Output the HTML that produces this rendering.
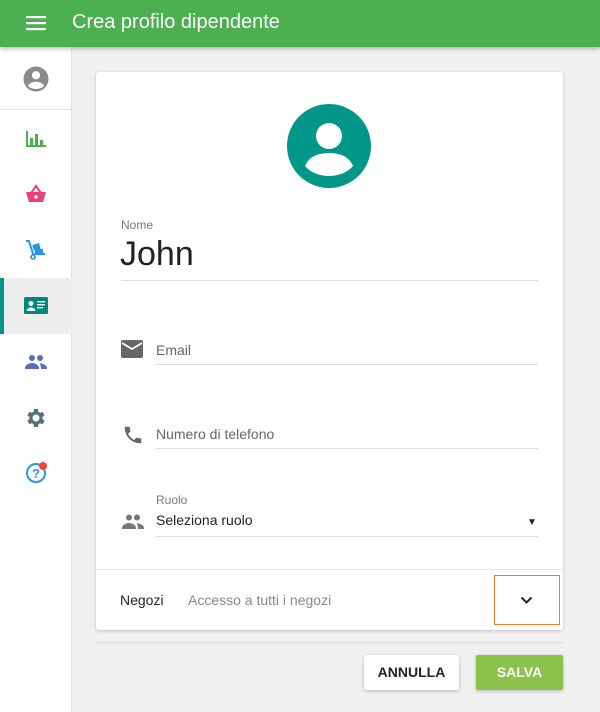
<!DOCTYPE html>
<html><head><meta charset="utf-8"><style>
*{margin:0;padding:0;box-sizing:border-box}
body{width:600px;height:712px;background:#f0f0f0;font-family:"Liberation Sans",Roboto,sans-serif;position:relative;overflow:hidden}
.hdr{position:absolute;left:0;top:0;width:600px;height:47px;background:#4caf50;box-shadow:0 2px 4px rgba(0,0,0,.25);z-index:2}
.hdr .t{position:absolute;left:72px;top:11px;color:#fff;font-size:20px}
.side{position:absolute;left:0;top:47px;width:72px;height:665px;background:#fff;border-right:1px solid #e0e0e0}
.ic{position:absolute;left:24px;width:24px;height:24px}
.card{position:absolute;left:96px;top:72px;width:467px;height:558px;background:#fff;border-radius:3px;box-shadow:0 1px 3px rgba(0,0,0,.2)}
.a{position:absolute;color:#555}
.ul{position:absolute;height:1px;background:#ddd}
</style></head><body>
<div class="hdr">
<svg style="position:absolute;left:26px;top:14px" width="20" height="18"><rect y="2" width="20" height="2.2" fill="#fff"/><rect y="8" width="20" height="2.2" fill="#fff"/><rect y="14" width="20" height="2.2" fill="#fff"/></svg>
<div class="t">Crea profilo dipendente</div></div>
<div class="side">
<svg class="ic" style="left:21px;top:17px;width:30px;height:30px" viewBox="0 0 24 24"><circle cx="12" cy="12" r="10" fill="#8a8a8a"/><circle cx="12" cy="9" r="3.3" fill="#fff"/><path d="M5.5 17.5c1.5-2.5 4-3.3 6.5-3.3s5 .8 6.5 3.3C17 19 14.7 20 12 20s-5-1-6.5-2.5z" fill="#fff"/></svg>
<div style="position:absolute;left:0;top:62px;width:72px;height:1px;background:#e0e0e0"></div>
<svg class="ic" style="top:80px" viewBox="0 0 24 24"><path d="M2 4h2v16H2zM6 11h3v9H6zM11 7h3v13h-3zM16 13h3v7h-3zM2 18h20v2H2z" fill="#4caf50"/></svg>
<svg class="ic" style="top:136px" viewBox="0 0 24 24"><path d="M12 3L7 10h10z" fill="none" stroke="#ec407a" stroke-width="2"/><path d="M2 9h20l-3 10H5z" fill="#ec407a"/><circle cx="12" cy="14" r="1.7" fill="#fff"/></svg>
<svg class="ic" style="top:191px" viewBox="0 0 24 24"><path d="M2 3h3l4 13h12" fill="none" stroke="#2196f3" stroke-width="2"/><rect x="9" y="6" width="7" height="6" fill="#2196f3" transform="rotate(-15 12 9)"/><rect x="11" y="11" width="8" height="4" fill="#2196f3"/><circle cx="9" cy="19" r="2" fill="none" stroke="#2196f3" stroke-width="1.6"/></svg>
<div style="position:absolute;left:0;top:231px;width:72px;height:56px;background:#eee"></div>
<div style="position:absolute;left:0;top:231px;width:4px;height:56px;background:#009688"></div>
<svg class="ic" style="top:247px" viewBox="0 0 24 24"><rect x="0" y="3" width="24" height="17" rx="1.5" fill="#00897b"/><circle cx="7" cy="9.5" r="2.5" fill="#fff"/><path d="M2.5 17c.5-2.5 2.5-3.5 4.5-3.5s4 1 4.5 3.5z" fill="#fff"/><rect x="13" y="7" width="8" height="1.4" fill="#fff"/><rect x="13" y="10" width="8" height="1.4" fill="#fff"/><rect x="13" y="13" width="6" height="1.4" fill="#fff"/></svg>
<svg class="ic" style="top:303px" viewBox="0 0 24 24"><circle cx="8" cy="8" r="3" fill="#5c6bc0"/><circle cx="16" cy="8" r="3" fill="#5c6bc0"/><path d="M1 18c0-3 4-5 7-5s7 2 7 5v1H1zM15.5 13.2c3 .2 7.5 1.6 7.5 4.8v1h-6v-1c0-2-.6-3.5-1.5-4.8z" fill="#5c6bc0"/></svg>
<svg class="ic" style="top:359px" viewBox="0 0 24 24"><path d="M19.4 13a7.5 7.5 0 0 0 0-2l2.1-1.6-2-3.5-2.5 1a7 7 0 0 0-1.7-1L15 3h-4l-.4 2.7a7 7 0 0 0-1.7 1l-2.5-1-2 3.5L6.5 11a7.5 7.5 0 0 0 0 2l-2.1 1.6 2 3.5 2.5-1c.5.4 1.1.8 1.7 1L11 21h4l.4-2.7c.6-.3 1.2-.6 1.7-1l2.5 1 2-3.5zM13 15.5a3.5 3.5 0 1 1 0-7 3.5 3.5 0 0 1 0 7z" fill="#546e7a" transform="translate(-1 0)"/></svg>
<svg class="ic" style="top:414px" viewBox="0 0 24 24"><circle cx="12" cy="12" r="9" fill="none" stroke="#2196f3" stroke-width="2"/><text x="12" y="17" font-size="13" font-weight="bold" text-anchor="middle" fill="#2196f3" font-family="Liberation Sans">?</text><circle cx="19" cy="5" r="4" fill="#f44336"/></svg>
</div>
<div class="card">
<svg style="position:absolute;left:191px;top:32px" width="84" height="84" viewBox="0 0 84 84"><circle cx="42" cy="42" r="42" fill="#009688"/><circle cx="42" cy="32" r="13" fill="#fff"/><path d="M18 62c4-10 14-13 24-13s20 3 24 13c-6 7-15 10-24 10s-18-3-24-10z" fill="#fff"/></svg>
<div class="a" style="left:25px;top:146px;font-size:12px;color:#777">Nome</div>
<div class="a" style="left:24px;top:163px;font-size:34px;color:#222">John</div>
<div class="ul" style="left:25px;top:208px;width:417px"></div>
<svg style="position:absolute;left:25px;top:268px" width="22" height="18" viewBox="0 0 22 18"><rect width="22" height="18" rx="2" fill="#666"/><path d="M1 3l10 6 10-6" fill="none" stroke="#fff" stroke-width="1.8"/></svg>
<div class="a" style="left:60px;top:270px;font-size:14px;color:#666">Email</div>
<div class="ul" style="left:60px;top:292px;width:382px"></div>
<svg style="position:absolute;left:26px;top:352px" width="22" height="22" viewBox="0 0 24 24"><path d="M6.6 10.8c1.4 2.8 3.8 5.1 6.6 6.6l2.2-2.2c.3-.3.7-.4 1-.2 1.1.4 2.3.6 3.6.6.6 0 1 .4 1 1V20c0 .6-.4 1-1 1C10.6 21 3 13.4 3 4c0-.6.4-1 1-1h3.5c.6 0 1 .4 1 1 0 1.3.2 2.5.6 3.6.1.3 0 .7-.2 1z" fill="#666"/></svg>
<div class="a" style="left:60px;top:354px;font-size:14px;color:#666">Numero di telefono</div>
<div class="ul" style="left:60px;top:376px;width:382px"></div>
<div class="a" style="left:60px;top:421px;font-size:12px;color:#777">Ruolo</div>
<svg style="position:absolute;left:25px;top:441px" width="24" height="18" viewBox="0 0 24 18"><circle cx="8" cy="4.5" r="3" fill="#777"/><circle cx="16" cy="4.5" r="3" fill="#777"/><path d="M1 15c0-3 4-5 7-5s7 2 7 5v1H1zM15.5 10.2c3 .2 7.5 1.6 7.5 4.8v1h-6v-1c0-2-.6-3.5-1.5-4.8z" fill="#777"/></svg>
<div class="a" style="left:60px;top:440px;font-size:14px;color:#222">Seleziona ruolo</div>
<div class="a" style="left:431px;top:445px;font-size:10px;color:#222">▼</div>
<div class="ul" style="left:60px;top:464px;width:382px"></div>
<div class="ul" style="left:0;top:497px;width:467px;background:#e6e6e6"></div>
<div class="a" style="left:24px;top:520px;font-size:14px;color:#222">Negozi</div>
<div class="a" style="left:92px;top:520px;font-size:14px;color:#888">Accesso a tutti i negozi</div>
<div style="position:absolute;left:398px;top:503px;width:66px;height:50px;border:1.5px solid #f07c2e"></div>
<svg style="position:absolute;left:424px;top:524px" width="13" height="9" viewBox="0 0 13 9"><path d="M1.5 1.5l5 5 5-5" fill="none" stroke="#222" stroke-width="2"/></svg>
</div>
<div style="position:absolute;left:96px;top:642px;width:467px;height:1px;background:#ddd"></div>
<div style="position:absolute;left:364px;top:655px;width:95px;height:35px;background:#fff;box-shadow:0 1px 3px rgba(0,0,0,.25);border-radius:2px;text-align:center;line-height:35px;font-size:14px;font-weight:bold;color:#222">ANNULLA</div>
<div style="position:absolute;left:476px;top:655px;width:87px;height:35px;background:#8bc34a;box-shadow:0 1px 3px rgba(0,0,0,.25);border-radius:2px;text-align:center;line-height:35px;font-size:14px;font-weight:bold;color:#fff">SALVA</div>
</body></html>
